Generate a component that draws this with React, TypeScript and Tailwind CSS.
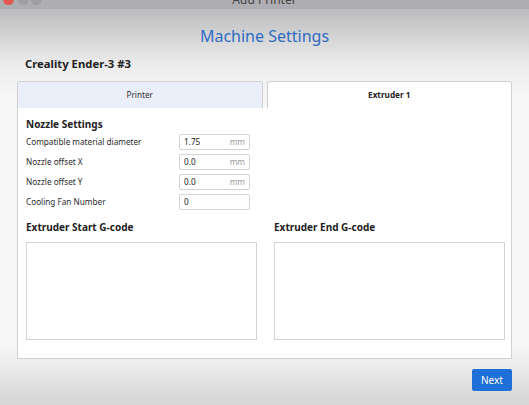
import { useState } from 'react';

const font = { fontFamily: '"Noto Sans", "Open Sans", sans-serif' };

function Field({ label, value, unit }: { label: string; value: string; unit?: string }) {
  return (
    <div className="flex items-center h-[20px]">
      <span className="w-[153px] text-[8.2px] text-[#2b2b2b]">{label}</span>
      <div className="w-[71px] h-[16px] border border-[#d4d4d4] rounded-[2px] bg-white flex items-center px-[4px] text-[8.2px]">
        <span className="flex-1 text-[#222]">{value}</span>
        {unit && <span className="text-[#9a9a9a]">{unit}</span>}
      </div>
    </div>
  );
}

export default function App() {
  const [tab, setTab] = useState<'printer' | 'extruder'>('extruder');

  return (
    <div style={font} className="w-[529px] h-[405px] overflow-hidden flex flex-col bg-[#f4f4f4]">
      {/* window title bar, mostly cropped */}
      <div className="h-[9px] bg-[#aeadb1] relative">
        <div className="absolute left-[3px] top-[-6px] w-[11px] h-[11px] rounded-full bg-[#e0584f]" />
        <div className="absolute left-[18px] top-[-6px] w-[11px] h-[11px] rounded-full bg-[#9f9ea2]" />
        <div className="absolute left-[31px] top-[-6px] w-[11px] h-[11px] rounded-full bg-[#9f9ea2]" />
        <div className="absolute left-0 right-0 top-[-9px] text-center text-[12px] text-[#444]">Add Printer</div>
      </div>

      <div className="flex-1 flex flex-col bg-[linear-gradient(to_bottom,#bcbcbe_0%,#ececed_14%,#f6f6f6_22%,#f7f7f7_85%,#d5d5d6_100%)]">
        <h1 className="text-center text-[16px] text-[#2f6cc4] mt-[15px] leading-[24px]">Machine Settings</h1>
        <div className="ml-[25px] mt-[7px] text-[11.3px] font-bold text-[#222] leading-[18px]">Creality Ender-3 #3</div>

        <div className="mx-[17px] mt-[8px] w-[495px]">
          <div className="flex gap-[4px] h-[27px]">
            <button
              onClick={() => setTab('printer')}
              className={`flex-1 rounded-t-[3px] border border-[#d0d0d0] border-b-0 text-[8.2px] text-[#333] ${tab === 'printer' ? 'bg-white font-bold' : 'bg-[#e9eef8]'}`}
            >
              Printer
            </button>
            <button
              onClick={() => setTab('extruder')}
              className={`flex-1 rounded-t-[3px] border border-[#d0d0d0] border-b-0 text-[8.2px] text-[#222] ${tab === 'extruder' ? 'bg-white font-bold' : 'bg-[#e9eef8]'}`}
            >
              Extruder 1
            </button>
          </div>

          <div className="h-[251px] bg-white border border-t-0 border-[#d0d0d0] px-[8px] pt-[8px]">
            <div className="text-[10px] font-bold text-[#222] leading-[16px]">Nozzle Settings</div>
            <div className="flex flex-col">
              <Field label="Compatible material diameter" value="1.75" unit="mm" />
              <Field label="Nozzle offset X" value="0.0" unit="mm" />
              <Field label="Nozzle offset Y" value="0.0" unit="mm" />
              <Field label="Cooling Fan Number" value="0" />
            </div>

            <div className="mt-[7px] grid grid-cols-2 gap-[17px] w-[479px]">
              <div>
                <div className="text-[10px] font-bold text-[#222] leading-[16px]">Extruder Start G-code</div>
                <textarea className="mt-[7px] w-[231px] h-[98px] border border-[#d4d4d4] bg-white resize-none block" />
              </div>
              <div>
                <div className="text-[10px] font-bold text-[#222] leading-[16px]">Extruder End G-code</div>
                <textarea className="mt-[7px] w-[231px] h-[98px] border border-[#d4d4d4] bg-white resize-none block" />
              </div>
            </div>
          </div>
        </div>

        <div className="flex justify-end mr-[17px] mt-[10px]">
          <button className="w-[40px] h-[22px] bg-[#1f6fd8] rounded-[2px] text-white text-[10px]">Next</button>
        </div>
      </div>
    </div>
  );
}
